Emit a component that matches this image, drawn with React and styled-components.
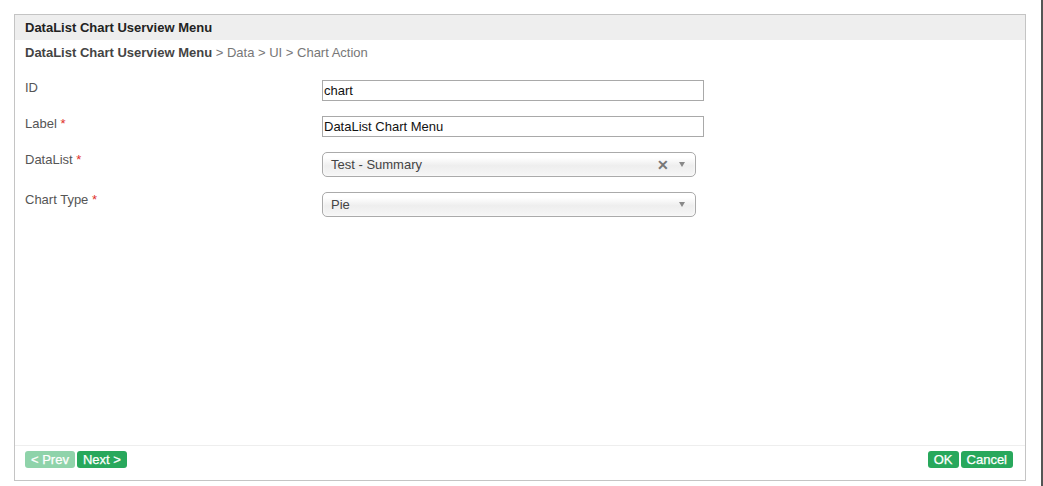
import React from "react";
import styled, { createGlobalStyle } from "styled-components";

const Global = createGlobalStyle`
  html, body { margin: 0; padding: 0; background: #fff; }
  body { font-family: "Liberation Sans", Arial, sans-serif; font-size: 13px; color: #333; }
  * { box-sizing: border-box; }
`;

const Page = styled.div`
  width: 1043px;
  height: 486px;
  padding: 14px 0 0 14px;
  border-right: 2px solid #555;
  overflow: hidden;
`;

const Panel = styled.div`
  width: 1012px;
  height: 467px;
  border: 1px solid #c4c4c4;
  display: flex;
  flex-direction: column;
`;

const Header = styled.div`
  height: 25px;
  background: #eeeeee;
  padding-left: 10px;
  display: flex;
  align-items: center;
  font-weight: bold;
  font-size: 13px;
  color: #222;
`;

const Crumbs = styled.div`
  padding: 5px 0 0 10px;
  height: 25px;
  line-height: 16px;
  color: #777;
  font-size: 13px;
  b { color: #444; }
`;

const Form = styled.div`
  flex: 1;
  padding: 15px 10px 0 10px;
  display: flex;
  flex-direction: column;
  gap: 15px;
`;

const Row = styled.div`
  display: grid;
  grid-template-columns: 297px 1fr;
  align-items: start;
`;

const Label = styled.div`
  color: #555;
  font-size: 13px;
  line-height: 15px;
  span { color: #e0302a; }
`;

const Input = styled.div`
  width: 382px;
  height: 21px;
  border: 1px solid #a9a9a9;
  padding: 0 1px;
  line-height: 19px;
  color: #111;
  font-size: 13px;
`;

const Select = styled.div`
  width: 374px;
  height: 25px;
  border: 1px solid #aaa;
  border-radius: 5px;
  background: linear-gradient(#ffffff 20%, #eeeeee 55%, #f4f4f4 90%);
  padding: 0 8px 0 8px;
  display: flex;
  align-items: center;
  color: #444;
  font-size: 13px;
  box-shadow: inset 0 0 3px #fff;
`;

const SelText = styled.span`
  flex: 1;
`;

const Clear = styled.span`
  color: #777;
  font-weight: bold;
  font-size: 14px;
  margin-right: 10px;
`;

const Arrow = styled.span`
  width: 0;
  height: 0;
  border-left: 3.5px solid transparent;
  border-right: 3.5px solid transparent;
  border-top: 5px solid #888;
  margin-right: 2px;
`;

const Footer = styled.div`
  border-top: 1px solid #eee;
  padding: 5px 12px 12px 10px;
  display: flex;
  justify-content: space-between;
`;

const Group = styled.div`
  display: flex;
  gap: 2px;
`;

const Button = styled.button`
  height: 17px;
  padding: 0 6px;
  border: none;
  border-radius: 3px;
  background: ${(p) => (p.disabled ? "#8fd3aa" : "#28a85c")};
  color: #fff;
  font-family: "Liberation Sans", Arial, sans-serif;
  font-weight: normal;
  font-size: 13px;
  line-height: 17px;
  cursor: pointer;
  -webkit-text-stroke: 0.25px #fff;
`;

export default function App() {
  return (
    <Page>
      <Global />
      <Panel>
        <Header>DataList Chart Userview Menu</Header>
        <Crumbs>
          <b>DataList Chart Userview Menu</b> &gt; Data &gt; UI &gt; Chart Action
        </Crumbs>
        <Form>
          <Row>
            <Label>ID</Label>
            <Input>chart</Input>
          </Row>
          <Row>
            <Label>Label <span>*</span></Label>
            <Input>DataList Chart Menu</Input>
          </Row>
          <Row>
            <Label>DataList <span>*</span></Label>
            <Select>
              <SelText>Test - Summary</SelText>
              <Clear>✕</Clear>
              <Arrow />
            </Select>
          </Row>
          <Row>
            <Label>Chart Type <span>*</span></Label>
            <Select>
              <SelText>Pie</SelText>
              <Arrow />
            </Select>
          </Row>
        </Form>
        <Footer>
          <Group>
            <Button disabled>&lt; Prev</Button>
            <Button>Next &gt;</Button>
          </Group>
          <Group>
            <Button>OK</Button>
            <Button>Cancel</Button>
          </Group>
        </Footer>
      </Panel>
    </Page>
  );
}
